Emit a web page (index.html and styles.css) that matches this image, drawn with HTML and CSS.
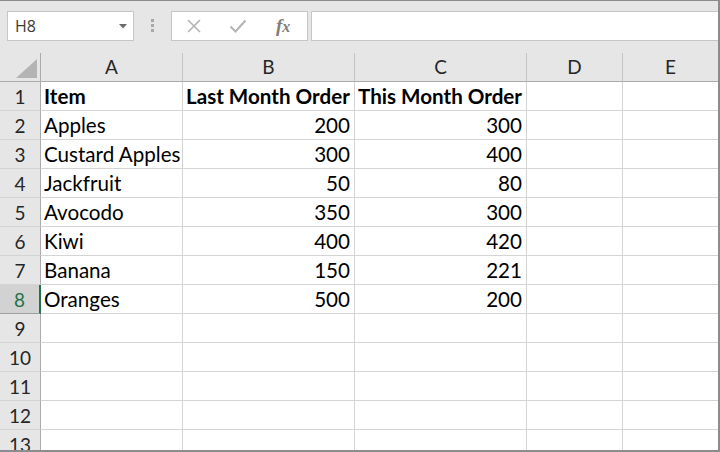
FILE: index.html
```html
<!DOCTYPE html>
<html lang="en">
<head>
    <meta charset="UTF-8">
    <title>Orders - Sheet1</title>
    <link rel="stylesheet" href="styles.css">
</head>
<body>
    <div class="window">
        <div class="formula-bar">
            <div class="name-box">
                <span>H8</span>
                <svg class="caret" width="8" height="5" viewBox="0 0 8 5"><path d="M0 0h8L4 4.5z" fill="#6b6b6b"/></svg>
            </div>
            <div class="grip"><i></i><i></i><i></i></div>
            <div class="fx-box">
                <svg class="fx-icon" width="16" height="16" viewBox="0 0 16 16"><path d="M2 2l12 12M14 2L2 14" stroke="#b4b4b4" stroke-width="1.6" fill="none"/></svg>
                <svg class="fx-icon" width="18" height="16" viewBox="0 0 18 16"><path d="M1.5 8.5l5 5L16.5 2.5" stroke="#b4b4b4" stroke-width="2" fill="none"/></svg>
                <span class="fx">f<span class="fx-x">x</span></span>
            </div>
            <div class="formula-input"></div>
        </div>

        <div class="sheet">
            <div class="corner"><div class="corner-tri"></div></div>
            <div class="col-head">A</div>
            <div class="col-head">B</div>
            <div class="col-head">C</div>
            <div class="col-head">D</div>
            <div class="col-head last">E</div>

            <div class="row-head">1</div>
            <div class="cell bold">Item</div>
            <div class="cell bold">Last Month Order</div>
            <div class="cell bold">This Month Order</div>
            <div class="cell"></div>
            <div class="cell last"></div>

            <div class="row-head">2</div>
            <div class="cell">Apples</div>
            <div class="cell num">200</div>
            <div class="cell num">300</div>
            <div class="cell"></div>
            <div class="cell last"></div>

            <div class="row-head">3</div>
            <div class="cell">Custard Apples</div>
            <div class="cell num">300</div>
            <div class="cell num">400</div>
            <div class="cell"></div>
            <div class="cell last"></div>

            <div class="row-head">4</div>
            <div class="cell">Jackfruit</div>
            <div class="cell num">50</div>
            <div class="cell num">80</div>
            <div class="cell"></div>
            <div class="cell last"></div>

            <div class="row-head">5</div>
            <div class="cell">Avocodo</div>
            <div class="cell num">350</div>
            <div class="cell num">300</div>
            <div class="cell"></div>
            <div class="cell last"></div>

            <div class="row-head">6</div>
            <div class="cell">Kiwi</div>
            <div class="cell num">400</div>
            <div class="cell num">420</div>
            <div class="cell"></div>
            <div class="cell last"></div>

            <div class="row-head">7</div>
            <div class="cell">Banana</div>
            <div class="cell num">150</div>
            <div class="cell num">221</div>
            <div class="cell"></div>
            <div class="cell last"></div>

            <div class="row-head active">8</div>
            <div class="cell">Oranges</div>
            <div class="cell num">500</div>
            <div class="cell num">200</div>
            <div class="cell"></div>
            <div class="cell last"></div>

            <div class="row-head">9</div>
            <div class="cell"></div><div class="cell"></div><div class="cell"></div><div class="cell"></div><div class="cell last"></div>
            <div class="row-head">10</div>
            <div class="cell"></div><div class="cell"></div><div class="cell"></div><div class="cell"></div><div class="cell last"></div>
            <div class="row-head">11</div>
            <div class="cell"></div><div class="cell"></div><div class="cell"></div><div class="cell"></div><div class="cell last"></div>
            <div class="row-head">12</div>
            <div class="cell"></div><div class="cell"></div><div class="cell"></div><div class="cell"></div><div class="cell last"></div>
            <div class="row-head">13</div>
            <div class="cell"></div><div class="cell"></div><div class="cell"></div><div class="cell"></div><div class="cell last"></div>
        </div>
    </div>
</body>
</html>
```

FILE: styles.css
```css
:root {
    --chrome: #e6e6e6;
    --frame: #8c8c8c;
    --grid: #d4d4d4;
    --head-line: #ababab;
    --box-line: #c6c6c6;
    --select: #217346;
}

body {
    margin: 0;
    font-family: Lato, 'Noto Sans', sans-serif;
    background: #ffffff;
}
.window {
    width: 720px;
    height: 452px;
    box-sizing: border-box;
    border-top: 1px solid var(--frame);
    border-right: 2px solid var(--frame);
    border-bottom: 2px solid var(--frame);
    overflow: hidden;
    background: #ffffff;
}

/* formula bar */
.formula-bar {
    display: flex;
    align-items: flex-start;
    height: 52px;
    box-sizing: border-box;
    padding: 10px 0 0 7px;
    background: var(--chrome);
}
.name-box {
    width: 127px;
    height: 30px;
    box-sizing: border-box;
    border: 1px solid var(--box-line);
    background: #ffffff;
    display: flex;
    align-items: center;
    justify-content: space-between;
    padding: 0 6px 0 7px;
    font-family: 'Open Sans', sans-serif;
    font-size: 16px;
    color: #3a3a3a;
}
.grip {
    display: flex;
    flex-direction: column;
    gap: 2px;
    margin: 8px 0 0 17px;
}
.grip i {
    display: block;
    width: 3px;
    height: 3px;
    background: #a8a8a8;
}
.fx-box {
    width: 137px;
    height: 30px;
    box-sizing: border-box;
    margin-left: 17px;
    border: 1px solid var(--box-line);
    background: #ffffff;
    display: flex;
    align-items: center;
    padding-left: 14px;
    gap: 27px;
}
.fx {
    font-family: 'Liberation Serif', serif;
    font-style: italic;
    font-weight: bold;
    font-size: 19px;
    color: #7d7d7d;
    margin-left: 2px;
}
.fx-x {
    font-size: 16px;
}
.formula-input {
    flex: 1;
    height: 30px;
    box-sizing: border-box;
    margin-left: 3px;
    border: 1px solid var(--box-line);
    border-right: none;
    background: #ffffff;
}

/* sheet grid */
.sheet {
    display: grid;
    grid-template-columns: 41px 142px 172px 172px 96px 95px;
    grid-auto-rows: 29px;
    font-size: 20.6px;
    color: #000000;
}
.corner,
.col-head,
.row-head {
    background: var(--chrome);
    box-sizing: border-box;
    color: #262626;
}
.corner {
    border-right: 1px solid var(--head-line);
    border-bottom: 1px solid var(--head-line);
    display: flex;
    justify-content: flex-end;
    align-items: flex-end;
    padding: 0 3px 3px 0;
}
.corner-tri {
    width: 21px;
    height: 19px;
    background: #b4b4b4;
    clip-path: polygon(100% 0, 100% 100%, 0 100%);
}
.col-head {
    border-right: 1px solid #c4c4c4;
    border-bottom: 1px solid var(--head-line);
    text-align: center;
    font-size: 19px;
    line-height: 28px;
}
.col-head.last {
    border-right: none;
}
.row-head {
    border-right: 1px solid var(--head-line);
    border-bottom: 1px solid var(--grid);
    text-align: center;
    font-size: 19px;
    line-height: 29px;
}
.row-head.active {
    background: #d2d2d2;
    color: var(--select);
    border-bottom-color: #9e9e9e;
    border-right: 2px solid var(--select);
}
.cell {
    box-sizing: border-box;
    border-right: 1px solid var(--grid);
    border-bottom: 1px solid var(--grid);
    padding: 0 4px 0 3px;
    line-height: 29px;
    white-space: nowrap;
    overflow: visible;
}
.cell.last {
    border-right: none;
}
.cell.bold {
    font-weight: bold;
}
.cell.num {
    text-align: right;
}
```
